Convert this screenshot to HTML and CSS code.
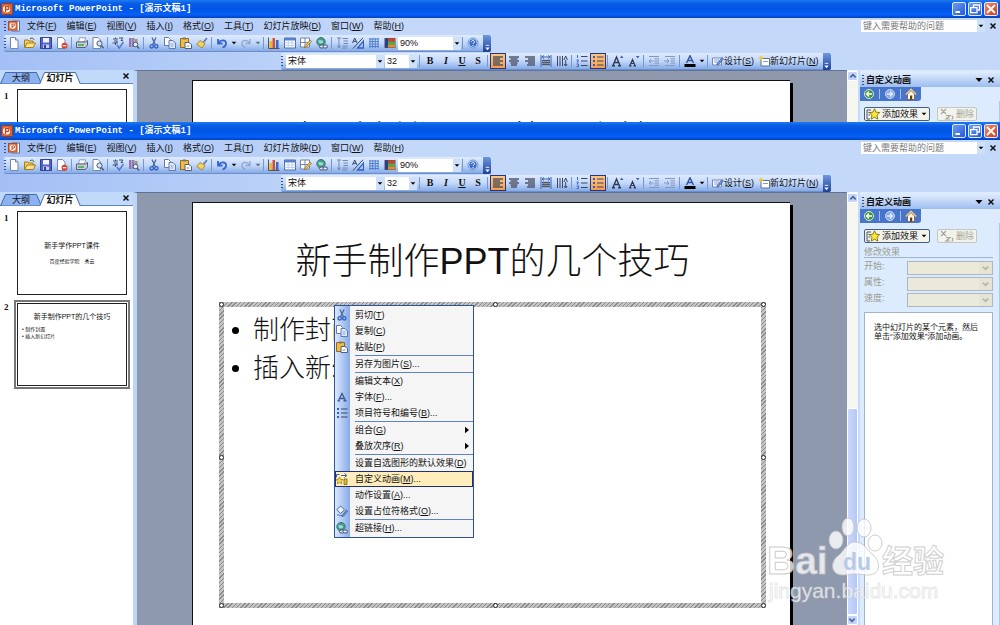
FILE: index.html
```html
<!DOCTYPE html>
<html lang="zh-CN">

<head>
    <meta charset="UTF-8">
    <meta name="viewport" content="width=device-width, initial-scale=1.0">
    <title>Microsoft PowerPoint - [演示文稿1]</title>
    <link rel="stylesheet" href="styles.css">
</head>

<body>
    <!-- 图标 -->
    <svg class="sprite" aria-hidden="true">
        <symbol id="app" viewBox="0 0 12 12"><rect x=".5" y=".5" width="11" height="11" rx="1" fill="#e0602c" stroke="#a33a14"/><circle cx="5.5" cy="6" r="3.6" fill="#fff"/><path d="M4.500 9V3.500h2a1.500 1.500 0 0 1 0 3h-2" fill="none" stroke="#c9431a" stroke-width="1.300"/></symbol>
        <symbol id="doc" viewBox="0 0 12 12"><path d="M4 1h7.500v10H4z" fill="#fff" stroke="#5b6f9c"/><rect x=".5" y="1.500" width="8.500" height="8.500" fill="#e9764a" stroke="#b04a22"/><circle cx="4.700" cy="5.700" r="3" fill="#fff"/><path d="M4 8V4h1.500a1 1 0 0 1 0 2.200H4" fill="none" stroke="#c9431a"/></symbol>
        <symbol id="new" viewBox="0 0 12 12"><path d="M2.500.5h5l2.500 2.500v8.500h-7.500z" fill="#fff" stroke="#7587ab"/><path d="M7.500.5V3H10" fill="#cfdcf2" stroke="#7587ab"/></symbol>
        <symbol id="open" viewBox="0 0 12 12"><path d="M.5 10.500V3h3.500l1 1h4v2" fill="#f6cf5a" stroke="#a67c17"/><path d="M.8 10.500 3 6h8.500l-2.300 4.500z" fill="#ffe28a" stroke="#a67c17"/><path d="M6 1.800c2-1.500 3.500-.5 4 1" fill="none" stroke="#444"/></symbol>
        <symbol id="save" viewBox="0 0 12 12"><path d="M.5.5h11v11H.5z" fill="#5562c8" stroke="#343e95"/><path d="M3 1h6v4.500H3z" fill="#f0f4ff"/><path d="M3 7.500h6V11H3z" fill="#c7cff0"/><path d="M4 8h2v3H4z" fill="#343e95"/></symbol>
        <symbol id="perm" viewBox="0 0 12 12"><path d="M1.500.5h5L9 3v8.500H1.500z" fill="#fff" stroke="#7587ab"/><circle cx="8.500" cy="8.700" r="3" fill="#d9412a"/><path d="M6.700 8.700h3.600" stroke="#fff" stroke-width="1.200"/></symbol>
        <symbol id="print" viewBox="0 0 12 12"><path d="M3.500.8h6L8.500 5h-6z" fill="#fff" stroke="#7587ab" stroke-width=".8"/><path d="M.5 5h9l2-1.500V8l-2 2.500h-9z" fill="#c9cfdb" stroke="#56617a"/><path d="M2 8h6" stroke="#3aa34a" stroke-width="1.500"/></symbol>
        <symbol id="preview" viewBox="0 0 12 12"><path d="M1 .5h5L8.500 3v8.500H1z" fill="#fff" stroke="#7587ab"/><circle cx="7.500" cy="6.500" r="2.600" fill="#cfe4fb" stroke="#4b5a78"/><path d="m9.300 8.500 2.400 2.800" stroke="#4b5a78" stroke-width="1.500"/></symbol>
        <symbol id="spell" viewBox="0 0 12 12"><path d="M1 2h5M3.500.5V2M2 4h3.500L3.500 6v2M.5 6h5.500M7 1h4L9 3.500h2" fill="none" stroke="#30446e" stroke-width=".9"/><path d="m5 8 2.300 3L11.500 5" fill="none" stroke="#5377c8" stroke-width="1.500"/></symbol>
        <symbol id="research" viewBox="0 0 12 12"><path d="M1 1h2.500v9H1z" fill="#9a6fb0"/><path d="M4 1h2.500v9H4z" fill="#7d8bb2"/><path d="M7 2h2.500v8H7z" fill="#b58d68"/><circle cx="7.500" cy="7.500" r="2.300" fill="#e3edfb" stroke="#4b5a78"/><path d="m9 9.300 2.200 2.200" stroke="#4b5a78" stroke-width="1.400"/></symbol>
        <symbol id="cut" viewBox="0 0 12 12"><path d="M4 .5 7.500 8M8 .5 4.500 8" stroke="#4d679c" stroke-width="1.300"/><circle cx="3.700" cy="9.300" r="1.700" fill="none" stroke="#2f5fc4" stroke-width="1.300"/><circle cx="8.300" cy="9.300" r="1.700" fill="none" stroke="#2f5fc4" stroke-width="1.300"/></symbol>
        <symbol id="copy" viewBox="0 0 12 12"><path d="M.5.5h4l2 2v6h-6z" fill="#fff" stroke="#6479ad"/><path d="M5 3.500h4l2.500 2.500v5.500H5z" fill="#dce8fb" stroke="#6479ad"/><path d="M6.500 7h3M6.500 9h3" stroke="#8fa6d6"/></symbol>
        <symbol id="paste" viewBox="0 0 12 12"><path d="M.5 1.500h8v9h-8z" fill="#edbd45" stroke="#93691a"/><path d="M3 .5h3v2H3z" fill="#777"/><path d="M5 5.500h4l2.500 2v4H5z" fill="#fff" stroke="#555f7a"/><path d="M6.500 9h3" stroke="#7d92c0"/></symbol>
        <symbol id="brush" viewBox="0 0 12 12"><path d="m7 4.500 3.500-4 1 1L8.500 5.500z" fill="#5f74ad"/><path d="m4 3.500 5 3L6 11 .8 7.500z" fill="#f3d163" stroke="#9c7a1c" stroke-width=".8"/></symbol>
        <symbol id="undo" viewBox="0 0 12 12"><path d="M2 2v4.500h4.500M2.500 6C5 2 11 3 10 7c-.3 1.500-1.500 3-3.500 3.500" fill="none" stroke="#3464d4" stroke-width="1.800"/></symbol>
        <symbol id="redo" viewBox="0 0 12 12"><path d="M10 2v4.500H5.500M9.500 6C7 2 1 3 2 7c.3 1.500 1.500 3 3.500 3.500" fill="none" stroke="#94a8cf" stroke-width="1.400"/></symbol>
        <symbol id="chart" viewBox="0 0 12 12"><path d="M.5.5v11h11" fill="none" stroke="#555"/><path d="M1.500 4H4v7H1.500z" fill="#f0b52c"/><path d="M4.500 1H7v10H4.500z" fill="#d7502e"/><path d="M8 3h2.500v8H8z" fill="#3e66c4"/></symbol>
        <symbol id="table" viewBox="0 0 12 12"><path d="M.5 1h11v10H.5z" fill="#fff" stroke="#4a69ae"/><path d="M.5 1h11v2.500H.5z" fill="#5a80d0"/><path d="M4.200 3v8M8 3v8M.5 6h11M.5 8.500h11" stroke="#b1c3e6" stroke-width=".8"/></symbol>
        <symbol id="borders" viewBox="0 0 12 12"><path d="M.5 1h9v9h-9z" fill="#fff" stroke="#7285ab"/><path d="M5 1v9M.5 5.500h9" stroke="#7285ab"/><path d="m5 9 5-6 1.500 1.500-5 5.500-2 .8z" fill="#f4c64a" stroke="#8c671a" stroke-width=".7"/></symbol>
        <symbol id="link" viewBox="0 0 12 12"><circle cx="5" cy="4.700" r="4.200" fill="#4aa163" stroke="#3572a4"/><path d="M2 2.500c2 2 4-.5 5 1.500s-2 3-4 2" fill="#98d7ee"/><rect x="3.500" y="8" width="4.500" height="3" rx="1.500" fill="#dbe3f1" stroke="#455274"/><rect x="7" y="8" width="4.500" height="3" rx="1.500" fill="#dbe3f1" stroke="#455274"/></symbol>
        <symbol id="expand" viewBox="0 0 12 12"><path d="M1 1h4M3 1v10M1.500 8.500 3 11l1.500-2.500M6.500 1.500H12M7.500 4H12M7.500 6.500H12M6.500 9H12M6 11h5" fill="none" stroke="#7287b3"/></symbol>
        <symbol id="format" viewBox="0 0 12 12"><path d="m.5 6 2.200-5L5 6M1.200 4.300h3M1 11.500 11 .8" fill="none" stroke="#33466d"/><path d="M5.500 11h6V4z" fill="none" stroke="#345fc0" stroke-width="1.300"/></symbol>
        <symbol id="grid" viewBox="0 0 12 12"><path d="M1 2h10M1 4.500h10M1 7h10M1 9.500h10M2 1v10M4.700 1v10M7.300 1v10M10 1v10" stroke="#5580d0"/></symbol>
        <symbol id="color" viewBox="0 0 12 12"><path d="M.5 1h11v10H.5z" fill="#555"/><path d="M1 1.500h3v9H1z" fill="#2b3f8c"/><path d="M4 1.500h7v3H4z" fill="#e03b26"/><path d="M4 4.500h7v3H4z" fill="#42b24c"/><path d="M4 7.500h7v3H4z" fill="#eb8a2a"/></symbol>
        <symbol id="help" viewBox="0 0 12 12"><circle cx="6" cy="6" r="5" fill="#d3e4fc" stroke="#6b94d6"/><circle cx="6" cy="6" r="3.700" fill="#3e6cc8"/><path d="M4.500 5c0-2 3-2 3 0 0 1-1.500 1-1.500 2M6 8v1" fill="none" stroke="#fff"/></symbol>
        <symbol id="left" viewBox="0 0 12 12"><path d="M1 2h10M1 4h7M1 6h10M1 8h7M1 10h10" stroke="#56565c" stroke-width="1.500"/></symbol>
        <symbol id="center" viewBox="0 0 12 12"><path d="M1 2h10M2.500 4h7M1 6h10M2.500 8h7M3 10h6" stroke="#50586c" stroke-width="1.500"/></symbol>
        <symbol id="right" viewBox="0 0 12 12"><path d="M1 2h10M4 4h7M1 6h10M4 8h7M3 10h8" stroke="#50586c" stroke-width="1.500"/></symbol>
        <symbol id="spread" viewBox="0 0 12 12"><path d="M1 0v12M11 0v12M2 2h8M4 .5 2 2l2 1.500M8 .5 10 2 8 3.500" fill="none" stroke="#3b62b4"/><path d="M2 5.500h8M2 7.500h8M2 9.500h8" stroke="#50586c" stroke-width="1.600"/></symbol>
        <symbol id="vertical" viewBox="0 0 12 12"><path d="M1.500 1v10M4 1v10M6.500 1v10" stroke="#3b4662"/><path d="m8 5 1.700-4 1.700 4M9.700 5v6M8.200 9l1.500 2 1.500-2" fill="none" stroke="#3b4662"/></symbol>
        <symbol id="numbers" viewBox="0 0 12 12"><path d="M1.500 0v3M.5 5h2L1 7h1.500M.5 9h2v2.500h-2" fill="none" stroke="#315fc4" stroke-width=".9"/><path d="M5 1.500h6.500M5 6h6.500M5 10.500h6.500" stroke="#3b4662"/></symbol>
        <symbol id="bullets" viewBox="0 0 12 12"><path d="M1 1h2v2H1zM1 5h2v2H1zM1 9h2v2H1z" fill="#315fc4"/><path d="M5 2h6.500M5 6h6.500M5 10h6.500" stroke="#3b4662"/></symbol>
        <symbol id="grow" viewBox="0 0 12 12"><path d="M1 10.500 4.500 2 8 10.500M2.500 7.500h4M0 10.800h3M6 10.800h3" fill="none" stroke="#303a55" stroke-width="1.400"/><path d="m8 3 1.700-2.500L11.500 3z" fill="#355fb8"/></symbol>
        <symbol id="shrink" viewBox="0 0 12 12"><path d="m2 10.500 2.500-6 2.500 6M3 8.500h3M1 10.800h2.500M5.500 10.800H8" fill="none" stroke="#303a55" stroke-width="1.200"/><path d="m8 1 1.700 2.500L11.500 1z" fill="#355fb8"/></symbol>
        <symbol id="outdent" viewBox="0 0 12 12"><path d="M1 1.500h10M6.500 3.800H11M6.500 6H11M6.500 8.200H11M1 10.500h10M5.500 6H1M3 4 1 6l2 2" fill="none" stroke="#8496bd"/></symbol>
        <symbol id="indent" viewBox="0 0 12 12"><path d="M1 1.500h10M6.500 3.800H11M6.500 6H11M6.500 8.200H11M1 10.500h10M0 6h5M3 4l2 2-2 2" fill="none" stroke="#8496bd"/></symbol>
        <symbol id="fontcolor" viewBox="0 0 12 12"><path d="M2.500 8 6 .8 9.500 8M4 5.500h4" fill="none" stroke="#2f529e" stroke-width="1.400"/><path d="M.5 9h11v3H.5z" fill="#000"/></symbol>
        <symbol id="design" viewBox="0 0 12 12"><path d="M.5 3h9v7h-9z" fill="#fff" stroke="#7285ab"/><path d="M2 5h5M2 7h4" stroke="#83a0da"/><path d="m5 8.500 5-6 1.500 1.300-4.500 5.500-2 .7z" fill="#6a94e0" stroke="#3e5f9f" stroke-width=".7"/></symbol>
        <symbol id="slide" viewBox="0 0 12 12"><path d="M3 3.500h8.500v7.500H3z" fill="#fff" stroke="#56709f"/><path d="M5 6.500h5" stroke="#7a9ad2"/><path d="m3 0 .9 2.100L6 3l-2.100.9L3 6l-.9-2.100L0 3l2.100-.9z" fill="#f6c52d"/></symbol>
        <symbol id="min" viewBox="0 0 12 12"><path d="M2.500 9h4.500" stroke="#fff" stroke-width="2"/></symbol>
        <symbol id="restore" viewBox="0 0 12 12"><path d="M4.500 4V2h6v5h-2" fill="none" stroke="#fff" stroke-width="1.300"/><path d="M1.700 4.700h6.300v5H1.700z" fill="none" stroke="#fff" stroke-width="1.300"/></symbol>
        <symbol id="close" viewBox="0 0 12 12"><path d="m2 2 8 8M10 2l-8 8" stroke="#fff" stroke-width="1.800"/></symbol>
        <symbol id="x" viewBox="0 0 12 12"><path d="m3.500 3.500 5 5M8.500 3.500l-5 5" stroke="#111" stroke-width="1.500"/></symbol>
        <symbol id="back" viewBox="0 0 12 12"><circle cx="6" cy="6" r="4.500" fill="#3f9140" stroke="#d8f0cf"/><path d="M9 6H3.500M6 3.500 3.500 6 6 8.500" fill="none" stroke="#fff" stroke-width="1.300"/></symbol>
        <symbol id="forward" viewBox="0 0 12 12"><circle cx="6" cy="6" r="4.500" fill="#8aa9e3" stroke="#cbdcf8"/><path d="M3 6h5.500M6 3.500 8.500 6 6 8.500" fill="none" stroke="#e2ebfb" stroke-width="1.300"/></symbol>
        <symbol id="home" viewBox="0 0 12 12"><path d="M2.500 6v5.500h7V6L6 2.500z" fill="#fff7e0" stroke="#79583a" stroke-width=".8"/><path d="M.8 6.500 6 1.200l5.200 5.300" fill="none" stroke="#e9c987" stroke-width="1.500"/><path d="M5 7.500h2.200v4H5z" fill="#5c3c26"/></symbol>
        <symbol id="star" viewBox="0 0 14 12"><path d="M1 2h4M1 2v9h3M2.500 4.500h2M2.500 7h1.500" fill="none" stroke="#454f66"/><path d="m8.500.8 1.600 3.400 3.600.4L11 7.200l.8 3.900-3.300-1.900-3.300 1.900L6 7.200 3.300 4.600l3.600-.4z" fill="#fbe73a" stroke="#6e6100" stroke-width=".8"/></symbol>
        <symbol id="remove" viewBox="0 0 14 12"><path d="m1 1 5 5M6 1 1 6M6 7.500h4l-4 3.500h4M12 8c1.500 1 1 3-.5 3" fill="none" stroke="#a5a597" stroke-width="1.200"/></symbol>
        <symbol id="letter" viewBox="0 0 12 12"><path d="m2.500 9.500 3.500-7L9.500 9.500M4 7.500h4M1.500 9.900h2.500M7.500 9.900h3" fill="none" stroke="#375891" stroke-width="1.300"/></symbol>
        <symbol id="anim" viewBox="0 0 12 12"><path d="M.5 1.500h3M.5 1.500v3M5 2.500h5.500M8.500.5l2.300 2-2.300 2" fill="none" stroke="#3a5fae"/><path d="m3.500 4 1 2.300 2.500.3L5.200 8.300l.5 2.500-2.200-1.300-2.200 1.300.5-2.500L0 6.600l2.500-.3z" fill="#f7dc45" stroke="#7a6a10" stroke-width=".6"/><path d="M8 6h3v5.500H8z" fill="#e9b93d" stroke="#7a5f10" stroke-width=".8"/></symbol>
        <symbol id="fill" viewBox="0 0 12 12"><path d="m.8 4.500 4-3.500 3.700 4-4 3.500z" fill="#edf3fd" stroke="#4b69a4"/><path d="m6.500 10 4-5 1.200 1-4 5-1.700.6z" fill="#7797d5" stroke="#37558f" stroke-width=".7"/><path d="M1 10c2-1 3 1.500 5 .5" fill="none" stroke="#4b69a4"/></symbol>
        <symbol id="down" viewBox="0 0 12 12"><path d="M2.500 4h7L6 8z"/></symbol>
        <symbol id="play" viewBox="0 0 12 12"><path d="M3 1v10l6-5z"/></symbol>
        <symbol id="chevron" viewBox="0 0 12 12"><path d="m2 8 4-4 4 4" fill="none" stroke="currentColor" stroke-width="2.400"/></symbol>
        <symbol id="more" viewBox="0 0 8 8"><path d="M2 1.500h4" stroke="#fff"/><path d="M1.500 4h5L4 7z" fill="#fff"/></symbol>
    </svg>

    <div class="window" id="front">
        <header class="titlebar">
            <svg class="icon"><use href="#app"/></svg>
            <h1>Microsoft PowerPoint - [演示文稿1]</h1>
            <button class="win-btn" aria-label="最小化"><svg class="icon"><use href="#min"/></svg></button>
            <button class="win-btn" aria-label="还原"><svg class="icon"><use href="#restore"/></svg></button>
            <button class="win-btn win-close" aria-label="关闭"><svg class="icon"><use href="#close"/></svg></button>
        </header>

        <nav class="menubar">
            <i class="grip"></i>
            <svg class="icon"><use href="#doc"/></svg>
            <div class="menus">
                <a href="#">文件(<u>F</u>)</a>
                <a href="#">编辑(<u>E</u>)</a>
                <a href="#">视图(<u>V</u>)</a>
                <a href="#">插入(<u>I</u>)</a>
                <a href="#">格式(<u>O</u>)</a>
                <a href="#">工具(<u>T</u>)</a>
                <a href="#">幻灯片放映(<u>D</u>)</a>
                <a href="#">窗口(<u>W</u>)</a>
                <a href="#">帮助(<u>H</u>)</a>
            </div>
            <div class="ask">
                <input type="text" placeholder="键入需要帮助的问题" aria-label="键入需要帮助的问题">
                <svg class="drop"><use href="#down"/></svg>
            </div>
            <button class="plain" aria-label="关闭文档"><svg class="icon"><use href="#x"/></svg></button>
        </nav>

        <div class="toolbar standard">
            <i class="grip"></i>
            <button class="tool" aria-label="新建"><svg class="icon"><use href="#new"/></svg></button>
            <button class="tool" aria-label="打开"><svg class="icon"><use href="#open"/></svg></button>
            <button class="tool" aria-label="保存"><svg class="icon"><use href="#save"/></svg></button>
            <button class="tool" aria-label="权限"><svg class="icon"><use href="#perm"/></svg></button>
            <i class="sep"></i>
            <button class="tool" aria-label="打印"><svg class="icon"><use href="#print"/></svg></button>
            <button class="tool" aria-label="打印预览"><svg class="icon"><use href="#preview"/></svg></button>
            <i class="sep"></i>
            <button class="tool" aria-label="拼写检查"><svg class="icon"><use href="#spell"/></svg></button>
            <button class="tool" aria-label="信息检索"><svg class="icon"><use href="#research"/></svg></button>
            <i class="sep"></i>
            <button class="tool" aria-label="剪切"><svg class="icon"><use href="#cut"/></svg></button>
            <button class="tool" aria-label="复制"><svg class="icon"><use href="#copy"/></svg></button>
            <button class="tool" aria-label="粘贴"><svg class="icon"><use href="#paste"/></svg></button>
            <button class="tool" aria-label="格式刷"><svg class="icon"><use href="#brush"/></svg></button>
            <i class="sep"></i>
            <button class="tool" aria-label="撤消"><svg class="icon"><use href="#undo"/></svg></button>
            <button class="more" aria-label="撤消列表"><svg class="small"><use href="#down"/></svg></button>
            <button class="tool" aria-label="恢复"><svg class="icon"><use href="#redo"/></svg></button>
            <button class="more off" aria-label="恢复列表"><svg class="small"><use href="#down"/></svg></button>
            <i class="sep"></i>
            <button class="tool" aria-label="图表"><svg class="icon"><use href="#chart"/></svg></button>
            <button class="tool" aria-label="表格"><svg class="icon"><use href="#table"/></svg></button>
            <button class="tool" aria-label="表格和边框"><svg class="icon"><use href="#borders"/></svg></button>
            <button class="tool" aria-label="超链接"><svg class="icon"><use href="#link"/></svg></button>
            <i class="sep"></i>
            <button class="tool" aria-label="全部展开"><svg class="icon"><use href="#expand"/></svg></button>
            <button class="tool" aria-label="显示格式"><svg class="icon"><use href="#format"/></svg></button>
            <button class="tool" aria-label="网格"><svg class="icon"><use href="#grid"/></svg></button>
            <button class="tool" aria-label="颜色"><svg class="icon"><use href="#color"/></svg></button>
            <div class="combo zoom">
                <select aria-label="显示比例"><option>90%</option></select>
                <svg class="drop"><use href="#down"/></svg>
            </div>
            <i class="sep"></i>
            <button class="tool" aria-label="帮助"><svg class="icon"><use href="#help"/></svg></button>
            <button class="cap" aria-label="工具栏选项"><svg><use href="#more"/></svg></button>
        </div>

        <div class="toolbar formatting">
            <i class="grip"></i>
            <div class="combo font">
                <select aria-label="字体"><option>宋体</option></select>
                <svg class="drop"><use href="#down"/></svg>
            </div>
            <div class="combo size">
                <select aria-label="字号"><option>32</option></select>
                <svg class="drop"><use href="#down"/></svg>
            </div>
            <i class="sep"></i>
            <button class="tool text">B</button>
            <button class="tool text italic">I</button>
            <button class="tool text under">U</button>
            <button class="tool text">S</button>
            <i class="sep"></i>
            <button class="tool on" aria-label="左对齐"><svg class="icon"><use href="#left"/></svg></button>
            <button class="tool" aria-label="居中"><svg class="icon"><use href="#center"/></svg></button>
            <button class="tool" aria-label="右对齐"><svg class="icon"><use href="#right"/></svg></button>
            <button class="tool" aria-label="分散对齐"><svg class="icon"><use href="#spread"/></svg></button>
            <button class="tool" aria-label="文字方向"><svg class="icon"><use href="#vertical"/></svg></button>
            <i class="sep"></i>
            <button class="tool" aria-label="编号"><svg class="icon"><use href="#numbers"/></svg></button>
            <button class="tool on" aria-label="项目符号"><svg class="icon"><use href="#bullets"/></svg></button>
            <i class="sep"></i>
            <button class="tool" aria-label="增大字号"><svg class="icon"><use href="#grow"/></svg></button>
            <button class="tool" aria-label="减小字号"><svg class="icon"><use href="#shrink"/></svg></button>
            <i class="sep"></i>
            <button class="tool" aria-label="减少缩进"><svg class="icon"><use href="#outdent"/></svg></button>
            <button class="tool" aria-label="增加缩进"><svg class="icon"><use href="#indent"/></svg></button>
            <i class="sep"></i>
            <button class="tool" aria-label="字体颜色"><svg class="icon"><use href="#fontcolor"/></svg></button>
            <button class="more" aria-label="颜色列表"><svg class="small"><use href="#down"/></svg></button>
            <i class="sep"></i>
            <button class="tool wide"><svg class="icon"><use href="#design"/></svg>设计(<u>S</u>)</button>
            <button class="tool wide"><svg class="icon"><use href="#slide"/></svg>新幻灯片(<u>N</u>)</button>
            <button class="cap" aria-label="工具栏选项"><svg><use href="#more"/></svg></button>
        </div>

        <div class="workspace">
            <aside class="outline">
                <div class="tabs">
                    <button class="tab"><svg viewBox="0 0 42 12"><path d="M.5 12 5.500.5h31l5 11.500z" fill="#8db2f2" stroke="#4468a8"/></svg><span>大纲</span></button>
                    <button class="tab current"><svg viewBox="0 0 42 12"><path d="M.5 12.500 5.500.5h31l5 12z" fill="#fff" stroke="#4468a8"/></svg><span>幻灯片</span></button>
                    <button class="plain" aria-label="关闭窗格"><svg class="icon"><use href="#x"/></svg></button>
                </div>
                <ol class="thumbs">
                    <li>
                        <b>1</b>
                        <div class="thumb first">
                            <div class="page">
                                <h3>新手学作PPT课件</h3>
                                <p>百度经验学院　秀云</p>
                            </div>
                        </div>
                    </li>
                    <li>
                        <b>2</b>
                        <div class="thumb selected">
                            <div class="page">
                                <h3>新手制作PPT的几个技巧</h3>
                                <p>• 制作封面</p>
                                <p>• 插入新幻灯片</p>
                            </div>
                        </div>
                    </li>
                </ol>
            </aside>

            <main class="stage">
                <div class="slide">
                    <h2>新手制作PPT的几个技巧</h2>
                    <div class="holder">
                        <ul>
                            <li>制作封面</li>
                            <li>插入新幻灯片</li>
                        </ul>
                        <i class="dot nw"></i><i class="dot n"></i><i class="dot ne"></i>
                        <i class="dot w"></i><i class="dot e"></i>
                        <i class="dot sw"></i><i class="dot s"></i><i class="dot se"></i>
                    </div>
                </div>
            </main>

            <div class="scrollbar">
                <button aria-label="向上"><svg class="small"><use href="#chevron"/></svg></button>
                <div class="track"></div>
                <div class="grab"></div>
                <button class="flip" aria-label="向下"><svg class="small"><use href="#chevron"/></svg></button>
            </div>

            <aside class="task">
                <div class="task-head">
                    <i class="grip"></i>
                    <h2>自定义动画</h2>
                    <button class="plain" aria-label="其他任务窗格"><svg class="icon"><use href="#down"/></svg></button>
                    <button class="plain" aria-label="关闭任务窗格"><svg class="icon"><use href="#x"/></svg></button>
                </div>
                <div class="task-nav">
                    <button class="plain" aria-label="后退"><svg class="icon"><use href="#back"/></svg></button>
                    <i></i>
                    <button class="plain" aria-label="前进"><svg class="icon"><use href="#forward"/></svg></button>
                    <i></i>
                    <button class="plain" aria-label="开始"><svg class="icon"><use href="#home"/></svg></button>
                </div>
                <div class="task-body">
                    <div class="actions">
                        <button class="add"><svg><use href="#star"/></svg>添加效果<svg class="small"><use href="#down"/></svg></button>
                        <button class="del" disabled><svg><use href="#remove"/></svg>删除</button>
                    </div>
                    <div class="effects">
                        <h3>修改效果</h3>
                        <label class="field"><span>开始:</span><select disabled></select><svg class="small"><use href="#chevron"/></svg></label>
                        <label class="field"><span>属性:</span><select disabled></select><svg class="small"><use href="#chevron"/></svg></label>
                        <label class="field"><span>速度:</span><select disabled></select><svg class="small"><use href="#chevron"/></svg></label>
                        <p class="hint">选中幻灯片的某个元素，然后<br>单击“添加效果”添加动画。</p>
                    </div>
                </div>
            </aside>
        </div>
    </div>

    <!-- 右键菜单 -->
    <ul class="context">
        <li><button><svg class="icon"><use href="#cut"/></svg><span>剪切(<u>T</u>)</span></button></li>
        <li><button><svg class="icon"><use href="#copy"/></svg><span>复制(<u>C</u>)</span></button></li>
        <li><button><svg class="icon"><use href="#paste"/></svg><span>粘贴(<u>P</u>)</span></button></li>
        <li class="line"><button><i class="icon"></i><span>另存为图片(<u>S</u>)...</span></button></li>
        <li class="line"><button><i class="icon"></i><span>编辑文本(<u>X</u>)</span></button></li>
        <li><button><svg class="icon"><use href="#letter"/></svg><span>字体(<u>F</u>)...</span></button></li>
        <li><button><svg class="icon"><use href="#bullets"/></svg><span>项目符号和编号(<u>B</u>)...</span></button></li>
        <li class="line"><button><i class="icon"></i><span>组合(<u>G</u>)</span><svg class="small"><use href="#play"/></svg></button></li>
        <li><button><i class="icon"></i><span>叠放次序(<u>R</u>)</span><svg class="small"><use href="#play"/></svg></button></li>
        <li class="line"><button><i class="icon"></i><span>设置自选图形的默认效果(<u>D</u>)</span></button></li>
        <li><button class="hover"><svg class="icon"><use href="#anim"/></svg><span>自定义动画(<u>M</u>)...</span></button></li>
        <li><button><i class="icon"></i><span>动作设置(<u>A</u>)...</span></button></li>
        <li><button><svg class="icon"><use href="#fill"/></svg><span>设置占位符格式(<u>O</u>)...</span></button></li>
        <li class="line"><button><svg class="icon"><use href="#link"/></svg><span>超链接(<u>H</u>)...</span></button></li>
    </ul>

    <!-- 水印 -->
    <svg class="watermark" viewBox="0 0 184 92">
        <g fill="#fff" fill-opacity=".8" stroke="#c2c2c2" stroke-opacity=".8" stroke-width="1">
            <ellipse cx="70" cy="23" rx="7" ry="9"/>
            <ellipse cx="82" cy="10" rx="6" ry="9"/>
            <ellipse cx="98" cy="11" rx="7" ry="9"/>
            <ellipse cx="109" cy="26" rx="7" ry="8"/>
            <path d="M89 25c-8 0-10 8-16 13-9 6-9 20 4 20 5 0 8-1 12-1s8 1 13 1c13 0 13-14 5-20-6-5-9-13-18-13z"/>
            <text x="1" y="57" class="wm-bai">Bai</text>
            <text x="116" y="55" class="wm-cn">经验</text>
            <text x="3" y="81" class="wm-url">jingyan.baidu.com</text>
        </g>
        <text x="77" y="53" class="wm-du">du</text>
    </svg>

    <script>
        // 后面的窗口与前面的窗口内容相同，只露出顶部
        var front = document.getElementById('front'),
            behind = front.cloneNode(true),
            hidden = behind.querySelectorAll('.page h3, .page p, .thumbs li + li, .holder, .effects');

        behind.id = 'behind';
        behind.className = 'window behind';

        // 被遮住的部分不需要
        for (var i = 0; i < hidden.length; i++) {
            hidden[i].remove();
        }

        document.body.insertBefore(behind, front);
    </script>
</body>

</html>
```
FILE: styles.css
```css
* {
    margin: 0;
    padding: 0;
    box-sizing: border-box;
    list-style: none;
}

body {
    height: 100vh;
    display: flex;
    flex-direction: column;
    overflow: hidden;
    position: relative;
    font: 9px/12px "Liberation Sans", "Noto Sans CJK SC", sans-serif;
    color: #111;
}

button,
input,
select {
    font: inherit;
    color: inherit;
    border: 0;
    background: none;
    border-radius: 0;
    appearance: none;
    min-width: 0;
}

button {
    display: flex;
    align-items: center;
    justify-content: center;
}

a {
    color: inherit;
    text-decoration: none;
    white-space: nowrap;
}

svg {
    flex: none;
}

.sprite {
    display: none;
}

.icon {
    width: 12px;
    height: 12px;
}

.small {
    width: 8px;
    height: 8px;
}

/* 窗口 */
.window {
    flex: 1;
    min-height: 0;
    display: flex;
    flex-direction: column;
    overflow: hidden;
    background: linear-gradient(to right, #a3bff5, #c4d9f9 40%);
}

.behind {
    flex: none;
    height: 122px;
}

.titlebar {
    flex: none;
    height: 18px;
    display: flex;
    align-items: center;
    gap: 2px;
    padding: 0 2px 0 1px;
    color: #fff;
    background: linear-gradient(#1b7cf2, #0a5ce6 20%, #0055e3 50%, #0560fa 80%, #0242c0);
}

.titlebar h1 {
    flex: 1;
    font: bold 9px/14px "Liberation Mono", "Noto Sans CJK SC", monospace;
}

.win-btn {
    width: 14px;
    height: 14px;
    border: 1px solid #dce8ff;
    border-radius: 2px;
    background: linear-gradient(135deg, #6f9cf5, #2558d8);
}

.win-close {
    background: linear-gradient(135deg, #f08a68, #d23c18);
}

.menubar {
    flex: none;
    height: 17px;
    display: flex;
    align-items: center;
    gap: 2px;
    padding: 0 1px 2px 4px;
}

.menus {
    flex: 1;
    display: flex;
    gap: 10px;
    padding-left: 5px;
}

.grip {
    flex: none;
    width: 2px;
    height: 10px;
    background: repeating-linear-gradient(#34507f 0 1px, transparent 1px 3px);
}

.ask {
    width: 124px;
    height: 12px;
    display: flex;
    background: #fff;
}

.ask input {
    flex: 1;
    padding-left: 2px;
}

.ask input::placeholder {
    color: #777;
}

.drop {
    width: 8px;
    height: 100%;
    background: #cfe0fb;
}

.plain {
    flex: none;
    width: 12px;
    height: 12px;
}

/* 工具栏 */
.toolbar {
    flex: none;
    align-self: flex-start;
    height: 17px;
    display: flex;
    align-items: center;
    border-radius: 2px;
    border-bottom: 1px solid #6c8fcb;
    background: linear-gradient(#dfebfe, #c3d8fa 50%, #86abe6);
}

.standard {
    margin: 0 0 1px 4px;
}

.formatting {
    margin-left: 281px;
}

.tool {
    width: 16px;
    height: 16px;
}

.tool.on {
    border: 1px solid #26357d;
    background: linear-gradient(#fdc684, #f79d4c);
}

.tool.text {
    font: bold 10px/14px "Liberation Serif", serif;
}

.tool.italic {
    font-style: italic;
}

.tool.under {
    text-decoration: underline;
}

.tool.wide {
    width: auto;
    padding: 0 2px;
    white-space: nowrap;
}

.more {
    width: 8px;
    height: 16px;
}

.off {
    opacity: .5;
}

.sep {
    width: 1px;
    height: 12px;
    margin: 0 2px 0 1px;
    background: #7796c9;
}

.combo {
    height: 13px;
    display: flex;
    background: #fff;
}

.combo select {
    flex: 1;
    padding-left: 2px;
}

.zoom {
    width: 63px;
}

.font {
    width: 98px;
    margin: 0 1px 0 3px;
}

.size {
    width: 32px;
    margin-right: 1px;
}

.cap {
    width: 8px;
    height: 17px;
    margin-left: 2px;
    align-items: flex-end;
    border-radius: 0 2px 2px 0;
    background: linear-gradient(#6e98e0, #1d3f9a);
}

.cap svg {
    width: 7px;
    height: 9px;
}

/* 工作区 */
.workspace {
    flex: 1;
    min-height: 0;
    display: grid;
    grid-template-columns: 133px 1fr 11px 142px;
}

.outline {
    display: flex;
    flex-direction: column;
    background: #fff;
}

.tabs {
    flex: none;
    height: 14px;
    display: flex;
    padding-right: 1px;
    background: linear-gradient(#5f80bb, #5f80bb) 0 100% / 100% 1px no-repeat #c2dafa;
}

.tabs .plain {
    margin-left: auto;
}

.tab {
    display: grid;
    height: 12px;
    margin-top: 2px;
}

.tab svg,
.tab span {
    grid-area: 1 / 1;
}

.tab svg {
    width: 42px;
    height: 12px;
}

.tab.current {
    margin-left: -3px;
    font-weight: bold;
}

.thumbs {
    padding: 5px 3px 0 4px;
}

.thumbs li {
    display: flex;
    justify-content: space-between;
}

.thumbs b {
    padding-top: 1px;
    font-family: "Liberation Serif", serif;
}

.thumb {
    width: 116px;
    height: 89px;
    padding: 0 3px 5px;
}

.page {
    height: 84px;
    padding: 8px 4px;
    border: 1px solid #222;
    font: 5px/7px "Liberation Sans", "Noto Sans CJK SC", sans-serif;
    white-space: nowrap;
}

.page h3 {
    margin-bottom: 4px;
    font: 7px/10px "Liberation Sans", "Noto Sans CJK SC", sans-serif;
    text-align: center;
}

.first .page {
    padding-top: 29px;
    text-align: center;
}

.first h3 {
    margin-bottom: 7px;
}

.selected {
    padding: 1px;
    border: 2px solid #777;
}

.selected .page {
    height: 100%;
}

.stage {
    padding: 9px 57px 0 55px;
    border-left: 4px solid #bcd6fa;
    border-top: 1px solid #5e7396;
    background: #8f99ae;
    overflow: hidden;
}

.slide {
    height: 100%;
    padding: 39px 24px 18px 26px;
    border: solid #111;
    border-width: 1px 0 0 1px;
    background: #fff;
    box-shadow: 3px 3px #000;
}

.slide h2 {
    height: 60px;
    font: 300 36px/40px "Liberation Sans", "Noto Sans CJK SC", sans-serif;
    text-align: center;
    white-space: nowrap;
}

.holder {
    position: relative;
    height: 306px;
    padding: 5px;
    background: repeating-linear-gradient(135deg, #8c8c8c 0 1px, #c4c4c4 1px 3px);
}

.holder ul {
    height: 100%;
    padding: 4px 8px;
    background: #fff;
    font: 300 26px/38px "Liberation Sans", "Noto Sans CJK SC", sans-serif;
}

.holder li {
    display: flex;
    align-items: center;
    gap: 14px;
}

.holder li::before {
    content: "";
    width: 7px;
    height: 7px;
    border-radius: 50%;
    background: #000;
}

.dot {
    position: absolute;
    width: 5px;
    height: 5px;
    border: 1px solid #222;
    border-radius: 50%;
    background: #fff;
}

.nw, .n, .ne {
    top: 0;
}

.sw, .s, .se {
    bottom: 0;
}

.nw, .w, .sw {
    left: 0;
}

.ne, .e, .se {
    right: 0;
}

.n, .s {
    left: 50%;
}

.w, .e {
    top: 50%;
}

.scrollbar {
    display: flex;
    flex-direction: column;
    padding-top: 1px;
    background: #f6f6f1;
}

.scrollbar button {
    height: 10px;
    border: 1px solid #fff;
    border-radius: 2px;
    background: #c4d5fb;
    color: #4a6290;
}

.scrollbar .flip {
    transform: rotate(180deg);
}

.track,
.grab {
    flex: 1;
}

.grab {
    border: 1px solid #fff;
    border-radius: 2px;
    background: linear-gradient(to right, #c9d7fc, #b4c8f6);
}

/* 任务窗格 */
.task {
    display: flex;
    flex-direction: column;
    padding-top: 2px;
    border-left: 2px solid #c6dbfa;
    background: #dcebfe;
}

.task-head {
    flex: none;
    height: 15px;
    display: flex;
    align-items: center;
    padding: 0 3px 0 2px;
    background: linear-gradient(#e0ecfe, #9dbdf0);
}

.task-head h2 {
    flex: 1;
    padding-left: 2px;
    font-size: 9px;
}

.task-nav {
    flex: none;
    align-self: flex-start;
    height: 14px;
    display: flex;
    align-items: center;
    gap: 4px;
    padding: 0 4px 0 3px;
    border-bottom-right-radius: 3px;
    background: #4775cb;
}

.task-nav i {
    width: 1px;
    height: 10px;
    background: #a6c0ee;
}

.task-body {
    flex: 1;
    min-height: 0;
    display: flex;
    flex-direction: column;
    padding: 6px 6px 0 4px;
    border-right: 1px solid #a9c8f2;
}

.actions {
    display: flex;
    gap: 7px;
    margin-bottom: 3px;
}

.actions button {
    height: 14px;
    gap: 2px;
    padding: 0 1px;
    border: 1px solid #45607d;
    border-radius: 2px;
    background: #f3f3ee;
    white-space: nowrap;
}

.actions svg:first-child {
    width: 14px;
    height: 12px;
}

.actions .del {
    padding: 0 2px;
    color: #a5a597;
    border-color: #c5c7bd;
}

.effects {
    flex: 1;
    display: flex;
    flex-direction: column;
}

.effects h3 {
    height: 12px;
    margin-bottom: 3px;
    font-size: 9px;
    font-weight: normal;
    color: #9a9d92;
    border-bottom: 1px solid #a4b4c8;
}

.field {
    display: flex;
    height: 14px;
    margin-bottom: 2px;
    color: #9a9d92;
}

.field span {
    width: 43px;
    line-height: 10px;
}

.field select {
    flex: 1;
    border: solid #a9b8c4;
    border-width: 1px 0 1px 1px;
    background: #ebe9d9;
    opacity: 1;
}

.field svg {
    width: 14px;
    height: 14px;
    padding: 2px;
    border: solid #a9b8c4;
    border-width: 1px 0 1px 1px;
    background: #e6e4d4;
    transform: rotate(180deg);
    color: #b5b4a4;
}

.hint {
    flex: 1;
    margin-top: 3px;
    padding: 10px 9px;
    border: 1px solid #9fb4cf;
    border-bottom: 0;
    background: #fff;
    font-size: 8px;
    line-height: 9px;
    white-space: nowrap;
}

/* 右键菜单 */
.context {
    position: absolute;
    left: 334px;
    top: 305px;
    width: 140px;
    padding: 1px 0;
    border: 1px solid #2c5599;
    background: linear-gradient(to right, #dbe8fd, #86aae8 15px, #f5f5f5 15px);
}

.context button {
    width: 100%;
    height: 16px;
    justify-content: flex-start;
    gap: 7px;
    padding: 0 2px 0 1px;
    text-align: left;
    white-space: nowrap;
}

.context span {
    flex: 1;
}

.context .line {
    background: linear-gradient(#5f84bd, #5f84bd) 20px 0 / 100% 1px no-repeat;
    padding-top: 1px;
}

.context .hover {
    border: 1px solid #1f2f78;
    padding: 0 1px 0 0;
    background: #ffeebc;
}

.watermark {
    position: absolute;
    right: 50px;
    bottom: 16px;
    width: 184px;
    height: 92px;
    overflow: visible;
}

.wm-bai {
    font: bold 39px "Liberation Sans", sans-serif;
}

.wm-du {
    font: bold 23px "Liberation Sans", sans-serif;
    fill: #b9c9e8;
}

.wm-cn {
    font: bold 31px "Noto Sans CJK SC", sans-serif;
}

.wm-url {
    font: 21px "Liberation Sans", sans-serif;
    stroke-opacity: .4;
}
```
